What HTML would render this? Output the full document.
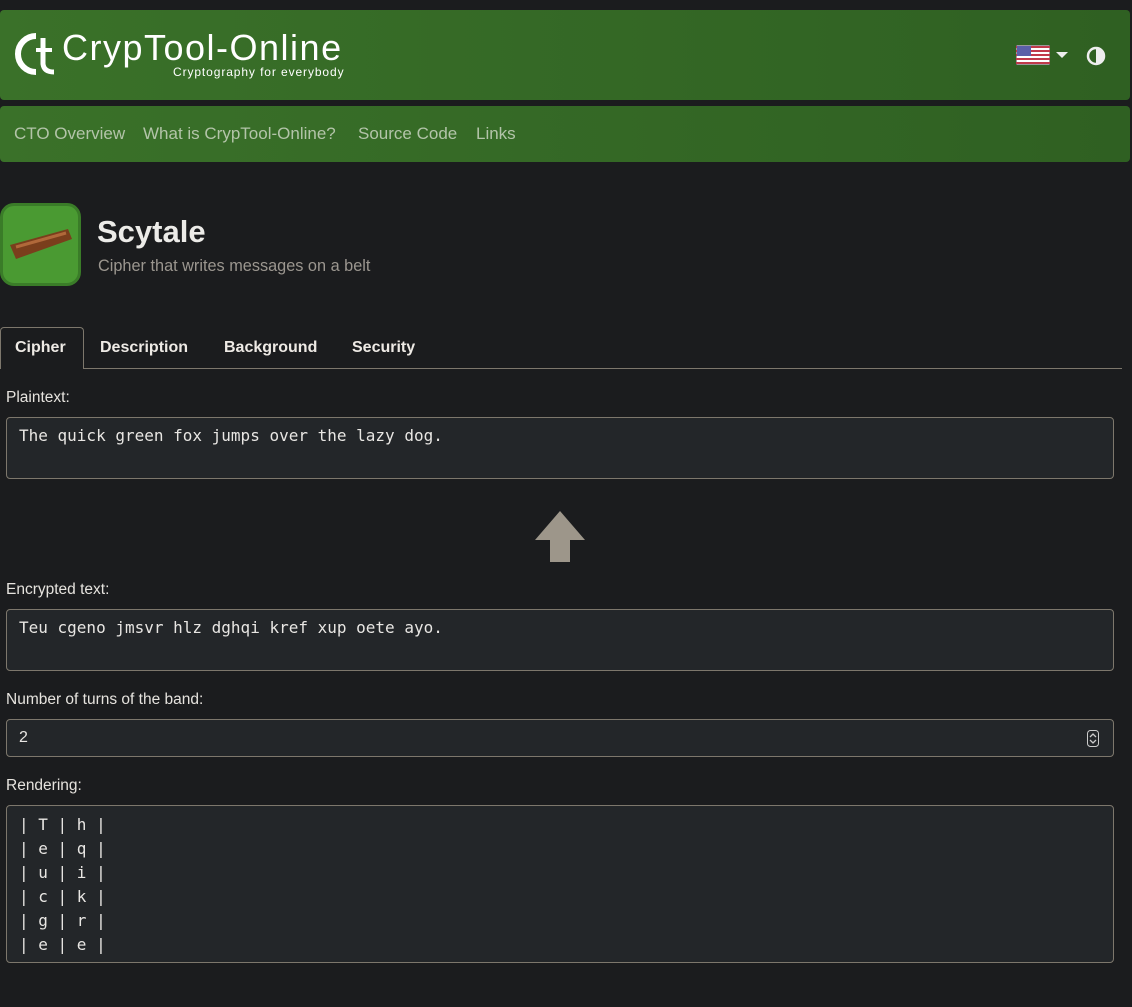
<!DOCTYPE html>
<html><head><meta charset="utf-8"><style>
*{box-sizing:border-box;margin:0;padding:0}
body{width:1132px;height:1007px;background:#1b1c1e;font-family:"Liberation Sans",sans-serif;color:#dcd9d4;overflow:hidden;position:relative}
.abs{position:absolute}
.hdr{left:0;top:10px;width:1130px;height:90px;background:linear-gradient(90deg,#3a7129,#2f6022);border-radius:4px}
.nav{left:0;top:106px;width:1130px;height:56px;background:linear-gradient(90deg,#3a7129,#2f6022);border-radius:4px}
.nav span{position:absolute;top:18px;font-size:17px;color:#b3c4a9}
.lbl{left:6px;font-size:15.5px;color:#e6e3de}
.ta{left:6px;width:1108px;background:#232629;border:1px solid #7d776c;border-radius:4px;font-family:"DejaVu Sans Mono",monospace;font-size:16px;color:#e8e6e3;padding:6px 12px;line-height:24px;white-space:pre;overflow:hidden}
.tab{top:339px;font-size:16px;font-weight:bold;color:#eeeae5}
</style></head><body>
<div class="abs hdr"></div>
<svg class="abs" style="left:10px;top:30px" width="50" height="48" viewBox="0 0 50 48"><path d="M26 6 A18 18 0 1 0 26 42" fill="none" stroke="#fff" stroke-width="6"/><path d="M33 8 V34 Q34 42 44 42" fill="none" stroke="#fff" stroke-width="5"/><path d="M26 20 H42" stroke="#fff" stroke-width="4"/></svg>
<div class="abs" style="left:62px;top:27px;font-size:36px;color:#fff;letter-spacing:1.5px">CrypTool-Online</div>
<div class="abs" style="left:173px;top:65px;font-size:12px;color:#fff;letter-spacing:0.9px">Cryptography for everybody</div>
<svg class="abs" style="left:1016px;top:45px" width="34" height="20" viewBox="0 0 34 20"><rect width="34" height="20" fill="#fff" stroke="#333"/><g fill="#c0394a"><rect y="1" width="34" height="2"/><rect y="5" width="34" height="2"/><rect y="9" width="34" height="2"/><rect y="13" width="34" height="2"/><rect y="17" width="34" height="2"/></g><rect x="1" y="1" width="14" height="10" fill="#5b5fa8"/></svg>
<svg class="abs" style="left:1056px;top:51px" width="12" height="8"><path d="M0 1 H12 L6 7Z" fill="#eee"/></svg>
<svg class="abs" style="left:1086px;top:46px" width="20" height="20"><circle cx="10" cy="10" r="8" fill="none" stroke="#eee" stroke-width="2.5"/><path d="M10 2 A8 8 0 0 1 10 18Z" fill="#eee"/></svg>
<div class="abs nav"><span style="left:14px">CTO Overview</span><span style="left:143px">What is CrypTool-Online?</span><span style="left:358px">Source Code</span><span style="left:476px">Links</span></div>
<div class="abs" style="left:0;top:203px;width:81px;height:83px;background:#4a9a32;border:3px solid #3a7c28;border-radius:14px"></div>
<svg class="abs" style="left:6px;top:225px" width="66" height="40" viewBox="0 0 66 40"><path d="M4 20 L62 4 L66 14 L10 34Z" fill="#7a3e1c"/><path d="M10 22 L60 8" stroke="#b0683a" stroke-width="3"/></svg>
<div class="abs" style="left:97px;top:214px;font-size:31px;font-weight:bold;color:#ecebe8">Scytale</div>
<div class="abs" style="left:98px;top:257px;font-size:16.3px;color:#9b968f">Cipher that writes messages on a belt</div>
<div class="abs" style="left:0;top:368px;width:1122px;height:1px;background:#7d776c"></div>
<div class="abs" style="left:0;top:327px;width:84px;height:42px;border:1px solid #7d776c;border-bottom:none;border-radius:4px 4px 0 0;background:#1b1c1e"></div>
<div class="abs tab" style="left:15px">Cipher</div>
<div class="abs tab" style="left:100px">Description</div>
<div class="abs tab" style="left:224px">Background</div>
<div class="abs tab" style="left:352px">Security</div>
<div class="abs lbl" style="top:389px">Plaintext:</div>
<div class="abs ta" style="top:417px;height:62px">The quick green fox jumps over the lazy dog.</div>
<svg class="abs" style="left:535px;top:511px" width="50" height="51"><path d="M25 0 L50 29 H35 V51 H15 V29 H0Z" fill="#9d968a"/></svg>
<div class="abs lbl" style="top:581px">Encrypted text:</div>
<div class="abs ta" style="top:609px;height:62px">Teu cgeno jmsvr hlz dghqi kref xup oete ayo.</div>
<div class="abs lbl" style="top:691px">Number of turns of the band:</div>
<div class="abs ta" style="top:719px;height:38px;font-family:'Liberation Sans',sans-serif;padding:6px 12px">2</div>
<svg class="abs" style="left:1087px;top:730px" width="12" height="17"><rect x="0.5" y="0.5" width="11" height="16" rx="3" fill="none" stroke="#ccc"/><path d="M3 7 L6 4 L9 7 M3 10 L6 13 L9 10" fill="none" stroke="#ccc" stroke-width="1.3"/></svg>
<div class="abs lbl" style="top:777px">Rendering:</div>
<div class="abs ta" style="top:805px;height:158px;padding-top:7px">| T | h |
| e | q |
| u | i |
| c | k |
| g | r |
| e | e |
| n | f |</div>
</body></html>
